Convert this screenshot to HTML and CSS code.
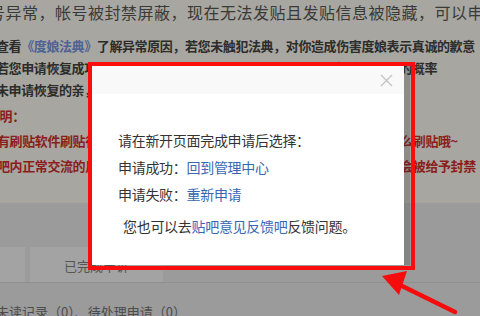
FILE: index.html
```html
<!DOCTYPE html>
<html lang="zh-CN">
<head>
<meta charset="utf-8">
<title>申诉</title>
<link rel="stylesheet" href="styles.css">
</head>
<body>
<div class="page">
  <section class="notice">
    <p class="headline">号异常，帐号被封禁屏蔽，现在无法发贴且发贴信息被隐藏，可以申请恢复</p>
    <p class="desc desc-first">查看<a class="law">《度娘法典》</a>了解异常原因，若您未触犯法典，对你造成伤害度娘表示真诚的歉意</p>
    <p class="desc">若您申请恢复成功，帐号将恢复正常使用，但若再次违规将会提高被封禁的概率</p>
    <p class="desc">未申请恢复的亲，可以点击下方按钮提交申请</p>
    <div class="warn">
      <p class="warn-title">说明：</p>
      <p>有刷贴软件刷贴行为的用户，申请恢复前请停止使用，以后请不要再用什么刷贴哦~</p>
      <p>吧内正常交流的用户不受影响，发布广告、灌水或者恶意刷贴的帐号都将会被给予封禁</p>
    </div>
  </section>
  <section class="records">
    <div class="tabs">
      <div class="tab tab-stub"></div>
      <div class="tab tab-done">已完成申诉</div>
    </div>
    <p class="counts">未读记录（0）、待处理申请（0）</p>
  </section>

  <div class="dialog">
    <div class="dialog-head">
      <svg class="close" width="13" height="13" viewBox="0 0 13 13"><path d="M1 1L12 12M12 1L1 12" stroke="#c4c4c4" stroke-width="1.4" fill="none"/></svg>
    </div>
    <div class="dialog-body">
      <p>请在新开页面完成申请后选择：</p>
      <p>申请成功：<a class="link">回到管理中心</a></p>
      <p>申请失败：<a class="link">重新申请</a></p>
      <p class="dialog-note">您也可以去<a class="link">贴吧意见反馈吧</a>反馈问题。</p>
    </div>
  </div>

  <div class="mark"></div>
  <svg class="arrow" width="480" height="316" viewBox="0 0 480 316">
    <line x1="455" y1="312" x2="398" y2="284" stroke="#f50c0c" stroke-width="4.5" stroke-linecap="round"/>
    <polygon points="382,276 407,271 399,295" fill="#f50c0c"/>
  </svg>
</div>
</body>
</html>
```
FILE: styles.css
```css
html, body {
  margin: 0;
  padding: 0;
  overflow: hidden;
}
body {
  width: 480px;
  height: 316px;
  font-family: "Noto Sans CJK SC", "Noto Sans", sans-serif;
}
p { margin: 0; }
.page {
  position: relative;
  width: 480px;
  height: 316px;
  overflow: hidden;
}
.notice {
  height: 203px;
  background: #a7a6a0;
  overflow: hidden;
}
.notice p {
  white-space: nowrap;
  overflow: hidden;
}
.headline {
  font-size: 16px;
  letter-spacing: 0.5px;
  line-height: 24px;
  color: #3a3a38;
  text-indent: -11px;
}
.desc {
  font-size: 13px;
  letter-spacing: -0.4px;
  line-height: 22px;
  font-weight: bold;
  color: #2c2c2a;
  text-indent: -4px;
}
.desc-first { margin-top: 11px; }
.law { color: #4d6295; }
.warn {
  margin-top: 2px;
  font-size: 13px;
  letter-spacing: -0.4px;
  line-height: 25px;
  font-weight: bold;
  color: #8c1d1b;
}
.warn p { text-indent: -3px; }
.warn .warn-title { text-indent: -13px; }

.records {
  height: 113px;
  background: #9b9b9b;
  overflow: hidden;
}
.tabs {
  margin-top: 44px;
  display: flex;
  gap: 5px;
  height: 35px;
  border-bottom: 1px solid #909090;
}
.tab {
  background: #a3a3a3;
  height: 35px;
}
.tab-stub { width: 25px; }
.tab-done {
  width: 133px;
  box-sizing: border-box;
  padding-top: 3px;
  line-height: 32px;
  text-align: center;
  font-size: 13px;
  color: #555;
}
.counts {
  margin-top: 19px;
  line-height: 20px;
  font-size: 13px;
  color: #4c4c4c;
  white-space: nowrap;
  text-indent: -4px;
}

.dialog {
  position: absolute;
  left: 92px;
  top: 66px;
  width: 312px;
  height: 199px;
  background: #fff;
  box-shadow: 6px 0 0 rgba(40, 40, 40, 0.2);
}
.dialog-head {
  height: 28px;
  background: #f9f9f9;
  display: flex;
  justify-content: flex-end;
  align-items: center;
  padding-right: 11px;
}
.dialog-body {
  padding: 33px 0 0 26px;
  font-size: 14px;
  letter-spacing: -0.3px;
  line-height: 27px;
  color: #333;
}
.dialog-note {
  margin-top: 5px;
  padding-left: 5px;
}
.link { color: #3767b5; }

.mark {
  position: absolute;
  left: 88px;
  top: 62px;
  width: 327px;
  height: 208px;
  box-sizing: border-box;
  border: 4.5px solid #fb0d0d;
}
.arrow {
  position: absolute;
  left: 0;
  top: 0;
  pointer-events: none;
}
```
